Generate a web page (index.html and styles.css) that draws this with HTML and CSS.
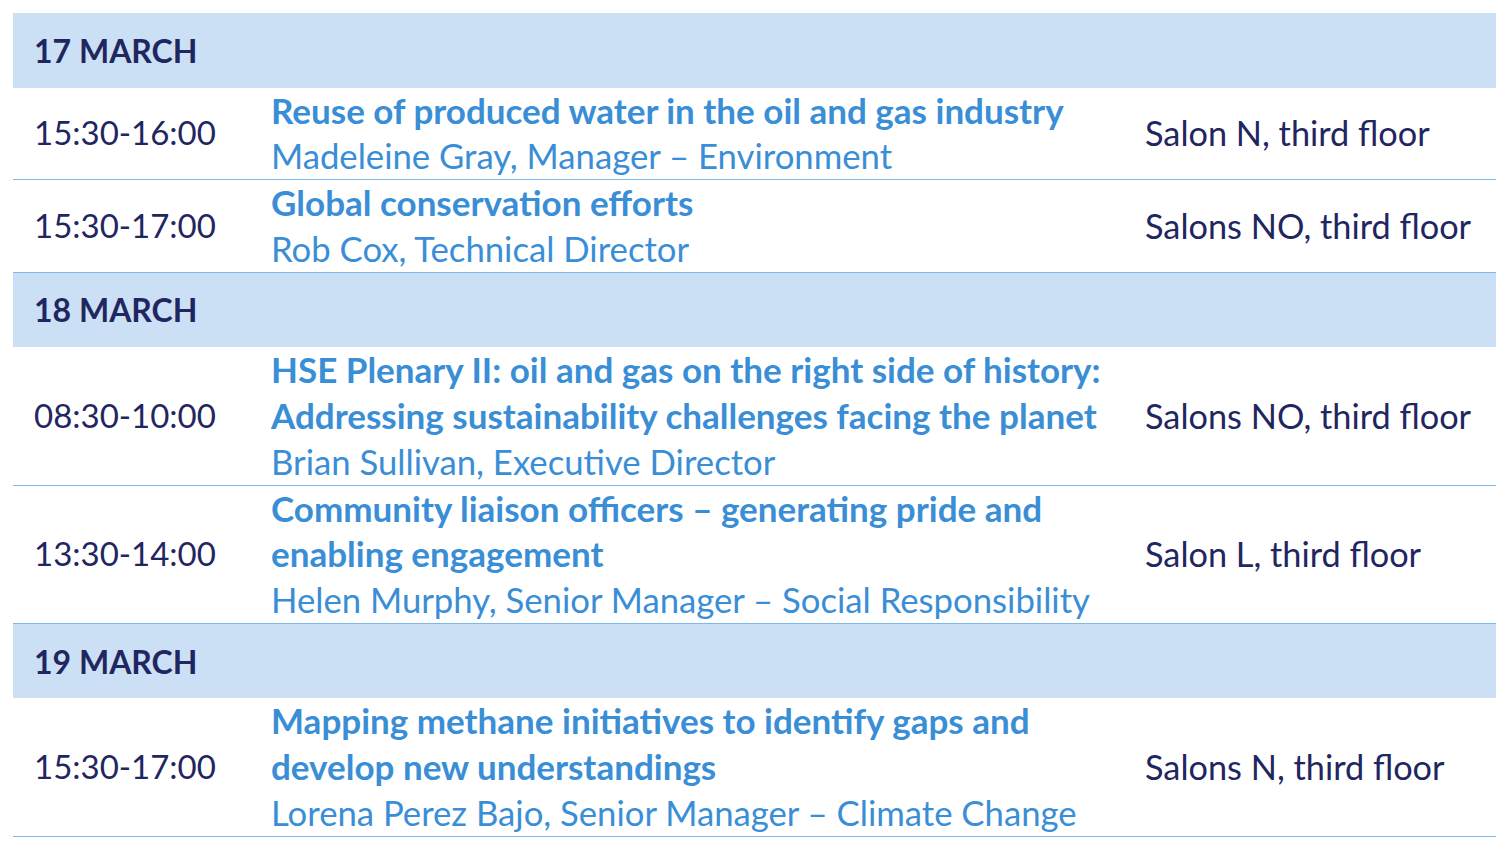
FILE: index.html
```html
<!DOCTYPE html>
<html lang="en">
<head>
<meta charset="utf-8">
<title>Schedule</title>
<link rel="stylesheet" href="styles.css">
</head>
<body>
<div class="schedule">
  <div class="day">17 MARCH</div>
  <div class="row">
    <div class="time">15:30-16:00</div>
    <div class="session">
      <div class="title">Reuse of produced water in the oil and gas industry</div>
      <div class="speaker">Madeleine Gray, Manager – Environment</div>
    </div>
    <div class="place">Salon N, third floor</div>
  </div>
  <div class="row">
    <div class="time">15:30-17:00</div>
    <div class="session">
      <div class="title">Global conservation efforts</div>
      <div class="speaker">Rob Cox, Technical Director</div>
    </div>
    <div class="place">Salons NO, third floor</div>
  </div>
  <div class="day">18 MARCH</div>
  <div class="row">
    <div class="time">08:30-10:00</div>
    <div class="session">
      <div class="title">HSE Plenary II: oil and gas on the right side of history:<br>Addressing sustainability challenges facing the planet</div>
      <div class="speaker">Brian Sullivan, Executive Director</div>
    </div>
    <div class="place">Salons NO, third floor</div>
  </div>
  <div class="row">
    <div class="time">13:30-14:00</div>
    <div class="session">
      <div class="title">Community liaison officers – generating pride and<br>enabling engagement</div>
      <div class="speaker">Helen Murphy, Senior Manager – Social Responsibility</div>
    </div>
    <div class="place">Salon L, third floor</div>
  </div>
  <div class="day">19 MARCH</div>
  <div class="row">
    <div class="time">15:30-17:00</div>
    <div class="session">
      <div class="title">Mapping methane initiatives to identify gaps and<br>develop new understandings</div>
      <div class="speaker">Lorena Perez Bajo, Senior Manager – Climate Change</div>
    </div>
    <div class="place">Salons N, third floor</div>
  </div>
</div>
</body>
</html>
```
FILE: styles.css
```css
html, body {
  margin: 0;
  padding: 0;
  background: #ffffff;
}
body {
  font-family: "Lato", "Liberation Sans", sans-serif;
  color: #1f2660;
}
.schedule {
  margin: 13px 15px 0 13px;
  display: flex;
  flex-direction: column;
}
.day {
  height: 74.5px;
  display: flex;
  align-items: center;
  padding-left: 21px;
  background: #cce0f5;
  font-weight: 700;
  font-size: 32px;
  color: #1f2660;
}
.row {
  display: grid;
  grid-template-columns: 238px 873px 1fr;
  align-items: center;
  padding-left: 21px;
  border-bottom: 1px solid #7fb7e8;
  line-height: 45.8px;
}
.time {
  font-size: 33px;
  color: #1f2660;
}
.session {
  display: flex;
  flex-direction: column;
  color: #3a8ed6;
  white-space: nowrap;
  margin-left: -1px;
}
.title {
  font-weight: 700;
  font-size: 35px;
}
.speaker {
  font-size: 34.7px;
}
.place {
  font-size: 34.3px;
  color: #1f2660;
  white-space: nowrap;
}
```
